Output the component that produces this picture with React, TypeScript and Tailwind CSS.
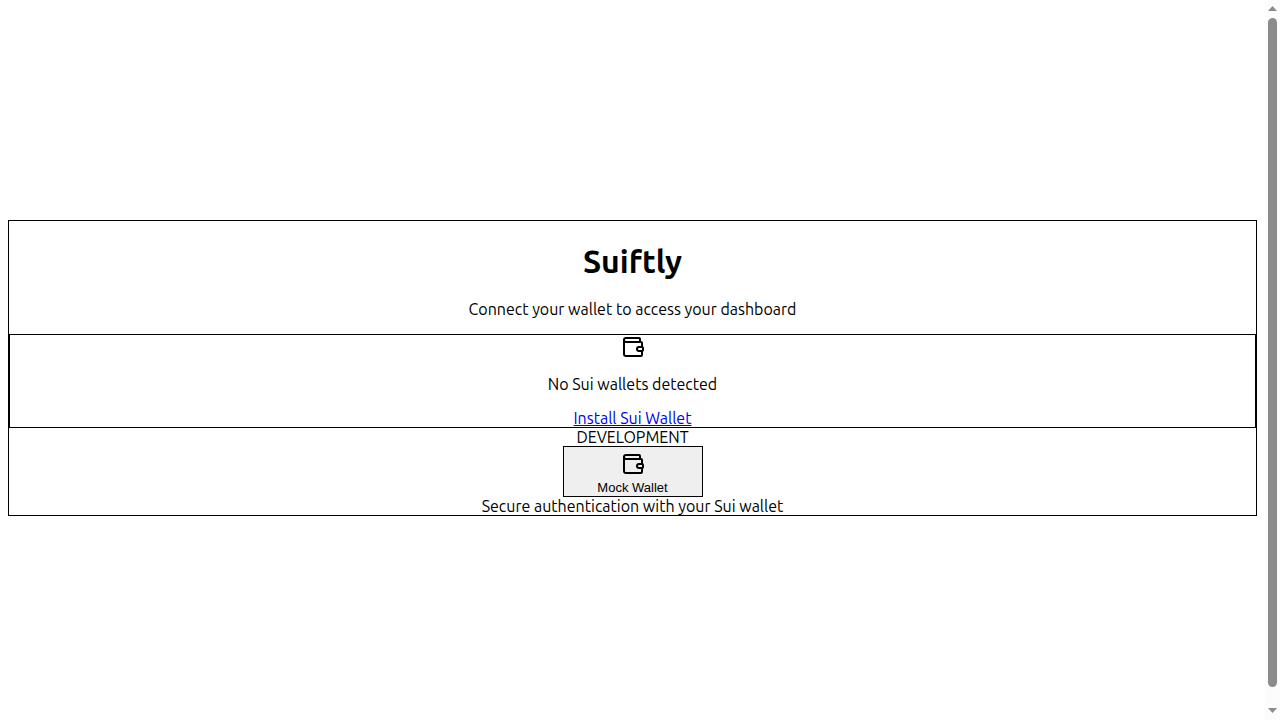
import { Wallet } from "lucide-react";

function ScrollRail() {
  return (
    <div aria-hidden="true" className="flex w-[15px] shrink-0 flex-col items-center justify-between bg-[#fcfcfc] pt-1.5 pb-[7px]">
      <svg width="9" height="5" viewBox="0 0 9 5" fill="#8b8b8b">
        <path d="M4.5 0 9 5H0z" />
      </svg>
      <div className="mt-[7px] mb-[21px] w-[9px] flex-1 rounded-full bg-[#8b8b8b]" />
      <svg width="9" height="5" viewBox="0 0 9 5" fill="#8b8b8b">
        <path d="M0 0h9L4.5 5z" />
      </svg>
    </div>
  );
}

export default function App() {
  return (
    <div className="flex min-h-screen bg-white font-['Ubuntu','Open_Sans',sans-serif] text-base/[18px] text-black">
      <main className="flex flex-1 flex-col justify-center px-2 pt-4">
        <section className="border border-black text-center">
          <h1 className="mt-[22px] mb-5 text-[32px]/[37px] font-bold">Suiftly</h1>
          <p className="mb-4">Connect your wallet to access your dashboard</p>
          <div className="border border-black">
            <Wallet size={24} className="mx-auto" />
            <p className="my-4">No Sui wallets detected</p>
            <a href="#install" className="block text-[#0000ee] underline">
              Install Sui Wallet
            </a>
          </div>
          <div>DEVELOPMENT</div>
          <button
            type="button"
            className="mx-auto flex w-[140px] flex-col items-center gap-1 border border-black bg-[#efefef] px-1.5 pt-[5px] pb-px font-['Liberation_Sans',Arial,sans-serif] text-[13px]/[15px]"
          >
            <Wallet size={24} />
            Mock Wallet
          </button>
          <div>Secure authentication with your Sui wallet</div>
        </section>
      </main>
      <ScrollRail />
    </div>
  );
}
